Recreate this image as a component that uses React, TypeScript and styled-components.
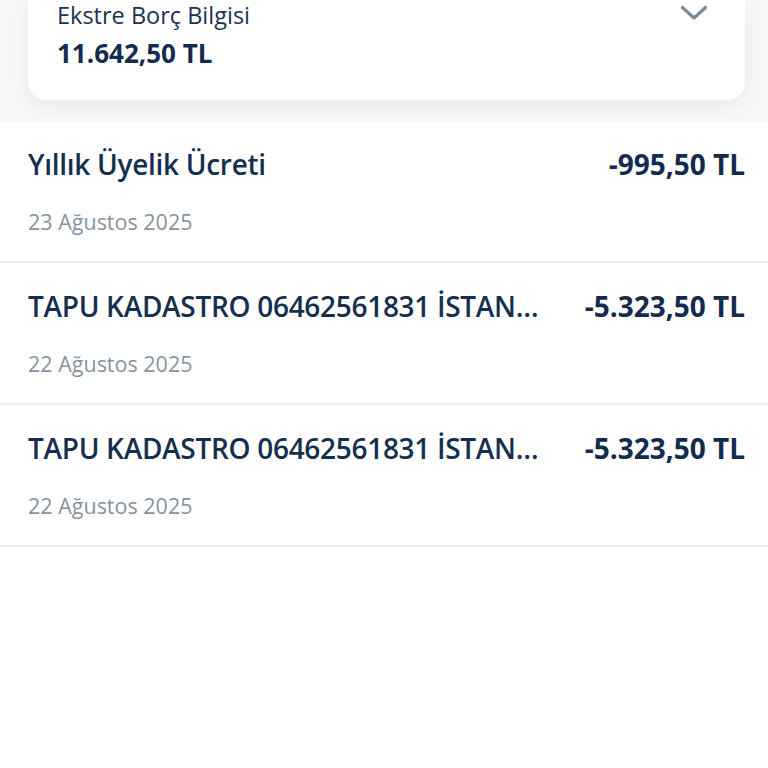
import React from "react";
import styled, { createGlobalStyle } from "styled-components";

const Global = createGlobalStyle`
  html, body { margin: 0; padding: 0; background: #ffffff; }
  body { font-family: "Open Sans", "Noto Sans", sans-serif; -webkit-font-smoothing: antialiased; }
  * { box-sizing: border-box; }
`;

const Page = styled.div`
  width: 768px;
  height: 768px;
  overflow: hidden;
  display: flex;
  flex-direction: column;
  background: #ffffff;
`;

const Header = styled.div`
  background: #f7f7f8;
  padding: 0 23px 21px 28px;
  height: 121px;
  display: flex;
  flex-direction: column;
  justify-content: flex-end;
`;

const Card = styled.div`
  flex-shrink: 0;
  background: #ffffff;
  border-radius: 0 0 18px 18px;
  box-shadow: 0 6px 18px rgba(0, 0, 0, 0.06);
  padding: 0 37px 29px 29px;
  height: 100px;
  display: flex;
  justify-content: space-between;
  align-items: flex-end;
`;

const CardText = styled.div`
  display: flex;
  flex-direction: column;
`;

const CardLabel = styled.div`
  font-size: 23.5px;
  font-weight: 500;
  color: #1b3252;
  line-height: 30px;
`;

const CardAmount = styled.div`
  font-size: 26px;
  font-weight: 700;
  color: #132c4d;
  line-height: 36px;
  margin-top: 5px;
`;

const Chevron = styled.svg`
  width: 28px;
  height: 16px;
  align-self: flex-start;
  margin-top: 5px;
`;

const List = styled.div`
  display: flex;
  flex-direction: column;
`;

const Row = styled.div`
  height: 142px;
  border-bottom: 2px solid #ededed;
  padding: 23px 23px 0 28px;
  display: flex;
  flex-direction: column;
`;

const TopLine = styled.div`
  display: flex;
  justify-content: space-between;
  align-items: center;
  gap: 30px;
`;

const Title = styled.div`
  font-size: 28px;
  font-weight: 600;
  letter-spacing: -0.3px;
  color: #15304f;
  white-space: nowrap;
  overflow: hidden;
  text-overflow: ellipsis;
  min-width: 0;
  line-height: 40px;
`;

const Amount = styled.div`
  font-size: 28px;
  font-weight: 700;
  color: #132c4d;
  white-space: nowrap;
  line-height: 40px;
`;

const DateText = styled.div`
  font-size: 21.5px;
  font-weight: 500;
  color: #8793a3;
  margin-top: 24px;
  line-height: 28px;
`;

const items = [
  { title: "Yıllık Üyelik Ücreti", amount: "-995,50 TL", date: "23 Ağustos 2025" },
  { title: "TAPU KADASTRO 06462561831 İSTANBUL", amount: "-5.323,50 TL", date: "22 Ağustos 2025" },
  { title: "TAPU KADASTRO 06462561831 İSTANBUL", amount: "-5.323,50 TL", date: "22 Ağustos 2025" },
];

export default function App() {
  return (
    <Page>
      <Global />
      <Header>
        <Card>
          <CardText>
            <CardLabel>Ekstre Borç Bilgisi</CardLabel>
            <CardAmount>11.642,50 TL</CardAmount>
          </CardText>
          <Chevron viewBox="0 0 28 16">
            <path d="M2.5 2.5 L14 13 L25.5 2.5" fill="none" stroke="#7d889a" strokeWidth="3.2" strokeLinecap="round" strokeLinejoin="round" />
          </Chevron>
        </Card>
      </Header>
      <List>
        {items.map((it, i) => (
          <Row key={i}>
            <TopLine>
              <Title>{it.title}</Title>
              <Amount>{it.amount}</Amount>
            </TopLine>
            <DateText>{it.date}</DateText>
          </Row>
        ))}
      </List>
    </Page>
  );
}
